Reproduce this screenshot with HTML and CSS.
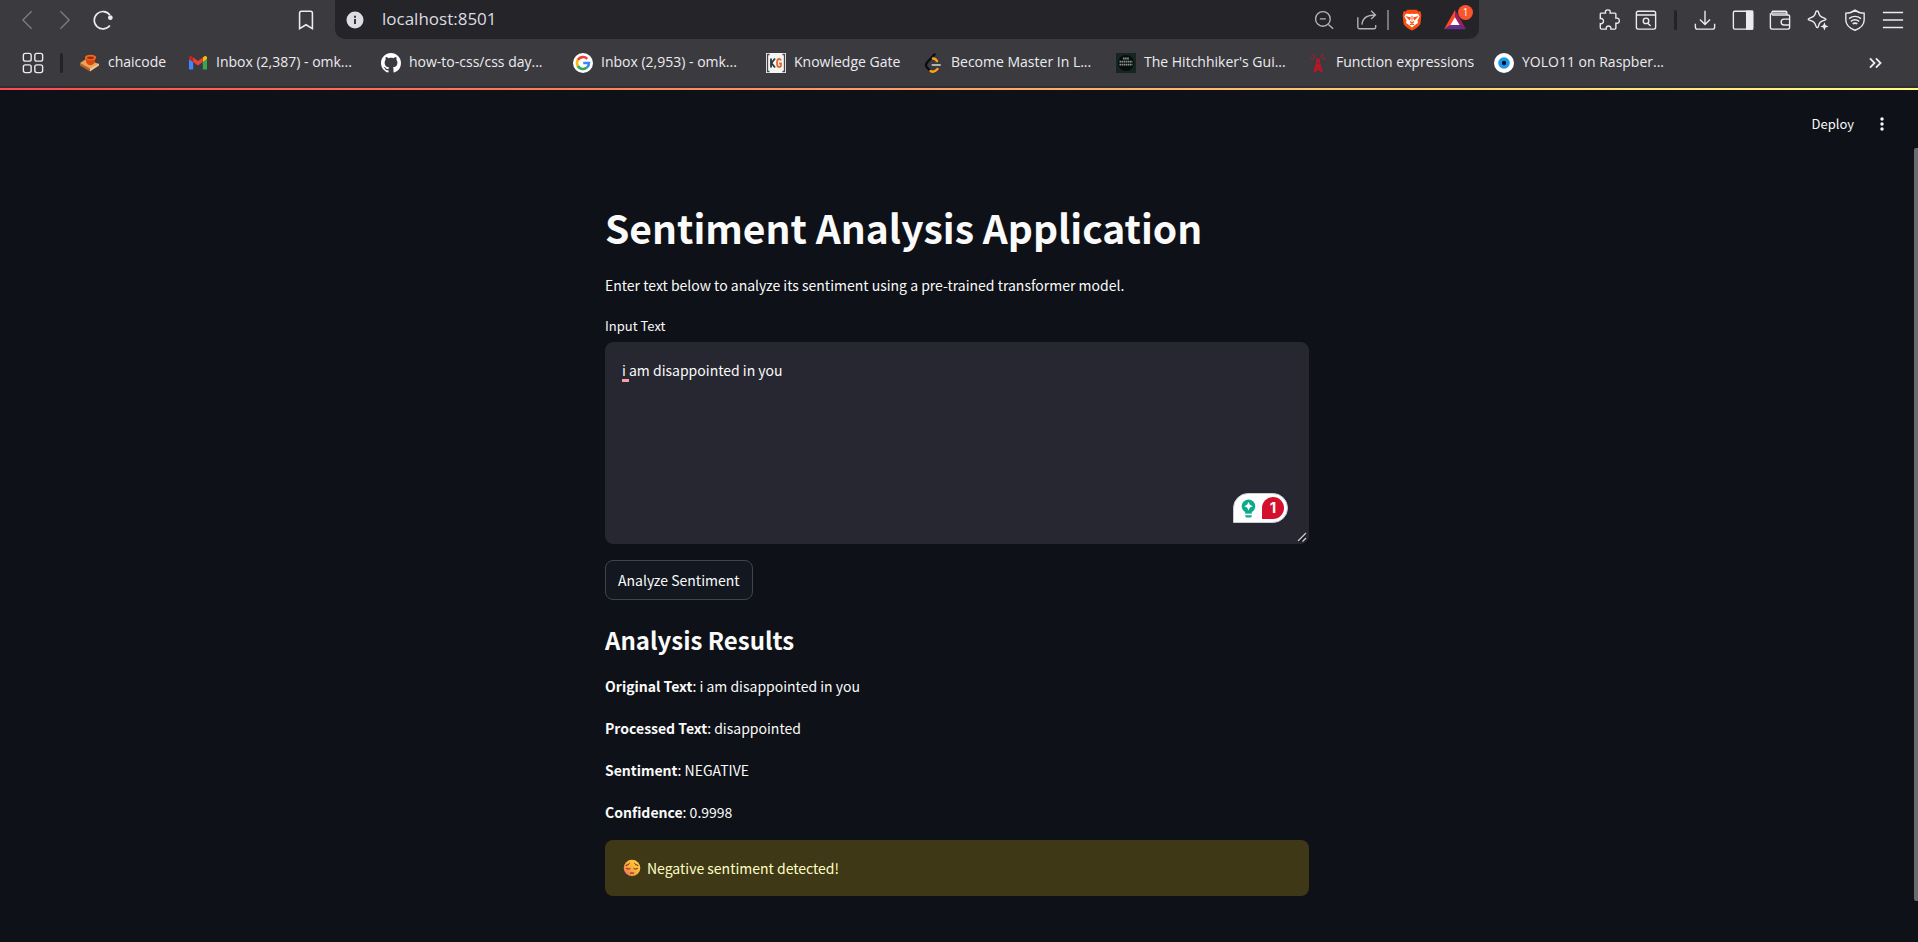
FILE: index.html
```html
<!DOCTYPE html>
<html lang="en">
<head>
<meta charset="utf-8">
<meta name="viewport" content="width=device-width, initial-scale=1">
<title>Sentiment Analysis Application</title>
<link rel="stylesheet" href="styles.css">
</head>
<body>
<div class="window">
  <header class="chrome">
    <div class="toolbar">
      <nav class="history" aria-label="History">
        <button class="tool tool-dim" aria-label="Back"><svg viewBox="0 0 24 24"><path d="M17 2.500 7.500 12l9.500 9.500"/></svg></button>
        <button class="tool tool-dim" aria-label="Forward"><svg viewBox="0 0 24 24"><path d="M7 2.500 16.500 12 7 21.500"/></svg></button>
        <button class="tool" aria-label="Reload"><svg viewBox="0 0 24 24"><path d="M19.500 18A9.500 9.500 0 1 1 19.500 6.500" stroke-width="1.800"/><circle cx="20" cy="9.500" r="2.600" fill="currentColor" stroke="none"/></svg></button>
      </nav>
      <button class="tool" aria-label="Bookmark this page"><svg viewBox="0 0 24 24"><path d="M5 4.500A2 2 0 0 1 7 2.500H17A2 2 0 0 1 19 4.500V21.500L12 17.200 5 21.500Z" stroke-width="1.700"/></svg></button>
      <div class="address">
        <svg class="info" viewBox="0 0 18 18"><circle cx="9" cy="9" r="8.500" fill="#dedde3"/><path d="M9 8v5M9 4.700v2" stroke="#38373c" stroke-width="2"/></svg>
        <input class="url" type="text" aria-label="Address" value="localhost:8501">
        <button class="tool tool-soft" aria-label="Zoom out"><svg viewBox="0 0 24 24"><circle cx="10.800" cy="10.800" r="8"/><path d="M7.500 10.800H14M16.800 16.800 22 21.500"/></svg></button>
        <button class="tool tool-soft tool-share" aria-label="Share"><svg viewBox="0 0 24 24"><path d="M2 9V20A1.500 1.500 0 0 0 3.500 21.500H20A1.500 1.500 0 0 0 21.500 20V17.500M6.500 17C7 10 11 6.500 21 6.500M16.500 2 21.200 6.500 16.500 11"/></svg></button>
        <span class="address-rule"></span>
        <button class="tool" aria-label="Brave Shields"><svg viewBox="0 0 24 26"><path d="M6.500 1H17.500L19.500 3 22 2.800 23 7 22 17C21 20 18 22 12 25.500 6 22 3 20 2 17L1 7 2 2.800 4.500 3Z" fill="#fb4f12" stroke="none"/><path d="M5 5.500 9.500 6 12 5.500 14.500 6 19 5.500 21 9 18.500 13.500 19 16.500 16 18.500 12 22 8 18.500 5 16.500 5.500 13.500 3 9Z" fill="#fff" stroke="none"/><path d="M6 9.500 10 10.500 9 12.500ZM18 9.500 14 10.500 15 12.500ZM12 8V13.500M9.500 15 12 16.500 14.500 15M9.500 18.500 12 17.500 14.500 18.500" fill="#fb4f12" stroke="#fb4f12" stroke-width="1.200"/></svg></button>
        <button class="tool tool-rewards" aria-label="Brave Rewards, 1 new"><svg viewBox="0 0 24 24"><path d="M12 1 0 22 7.500 17.500 12 9.500Z" fill="#ff4724" stroke="none"/><path d="M12 1 24 22 16.500 17.500 12 9.500Z" fill="#9e1f63" stroke="none"/><path d="M0 22H24L16.500 17.500H7.500Z" fill="#662d91" stroke="none"/><path d="M12 9 17 17.500H7Z" fill="#fff" stroke="none"/></svg><span class="count">1</span></button>
      </div>
      <div class="extensions">
        <button class="tool" aria-label="Extensions"><svg viewBox="0 0 24 24"><path d="M3 4.500H8.200C7.500 1.500 9 1 10.700 1S14 1.500 13.200 4.500H18.500Q19.500 4.500 19.500 5.500V10C22.500 9.500 23.200 11 23.200 12.800S22.500 16 19.500 15.500V20.500Q19.500 22 18.500 22H14C14.500 19.500 13 18.500 11.500 18.500S8.500 19.500 9 22H4Q2.500 22 2.500 20.500V16C5 16.500 6 14.800 6 13.200S5 10 2.500 10.500V5.500Q2.500 4.500 3 4.500Z"/></svg></button>
        <button class="tool" aria-label="Search page"><svg viewBox="0 0 24 24"><rect x="1.500" y="2.500" width="21" height="19.500" rx="2"/><path d="M1.500 6.500H22.500M14 15.500 17 18.500"/><circle cx="12" cy="13" r="3"/></svg></button>
      </div>
      <span class="rule"></span>
      <div class="actions">
        <button class="tool" aria-label="Downloads"><svg viewBox="0 0 24 24"><path d="M12 2V16.500M6.500 11.500 12 17 17.500 11.500M1.500 16V19.500Q1.500 22 4 22H20Q22.500 22 22.500 19.500V16"/></svg></button>
        <button class="tool" aria-label="Sidebar"><svg viewBox="0 0 24 24"><rect x="1.500" y="2.500" width="21" height="19.500" rx="1.500"/><path d="M16 2.500H22.500V22H16Z" fill="currentColor"/></svg></button>
        <button class="tool" aria-label="Wallet"><svg viewBox="0 0 24 24"><path d="M19.500 6V4Q19.500 2.500 18 2.500H4A2.500 2.500 0 0 0 4 6.500H21Q22.500 6.500 22.500 8V20Q22.500 22 20.500 22H3.500Q1.500 22 1.500 20V4.500M22.500 11H16.500A3 3 0 0 0 16.500 17.500H22.500M4 4.500H19"/></svg></button>
        <button class="tool" aria-label="Assistant"><svg viewBox="0 0 24 24"><path d="M11 2Q12 2 12.300 3C13.500 7.500 14.500 8.500 19.500 10.200 21 10.700 21 11.800 19.500 12.200 14.500 13.500 13.500 14.500 12.300 19.200 12 20.700 10.500 20.700 10 19.200 8.500 14.500 7.500 13.500 2.500 12.200 1 11.800 1 10.700 2.500 10.200 7.500 8.500 8.500 7.500 9.700 3Q10 2 11 2Z"/><path d="M19 14.500 20.300 17.700 23.500 19 20.300 20.300 19 23.500 17.700 20.300 14.500 19 17.700 17.700Z" fill="currentColor" stroke="none"/></svg></button>
        <button class="tool" aria-label="VPN"><svg viewBox="0 0 24 24"><path d="M12 1.200C15 3.500 18 4.500 22 4.500V12C22 17.500 18 21 12 23.200 6 21 2 17.500 2 12V4.500C6 4.500 9 3.500 12 1.200ZM5.500 10.500Q12 5.500 18.500 10.500M7.500 13.500Q12 10 16.500 13.500"/><path d="M9.500 16.200Q12 14.500 14.500 16.200" stroke-width="2"/></svg></button>
        <button class="tool" aria-label="Menu"><svg viewBox="0 0 24 24"><path d="M1 3.800H23M1 12H23M1 20.200H23" stroke-width="1.800"/></svg></button>
      </div>
    </div>
    <nav class="bookmarks" aria-label="Bookmarks">
      <button class="tool" aria-label="All bookmarks"><svg viewBox="0 0 24 24"><rect x="1.500" y="1.500" width="8.500" height="8.500" rx="2.200"/><rect x="14" y="1.500" width="8.500" height="8.500" rx="2.200"/><rect x="1.500" y="14" width="8.500" height="8.500" rx="2.200"/><rect x="14" y="14" width="8.500" height="8.500" rx="2.200"/></svg></button>
      <span class="rule"></span>
      <div class="bookmark-list">
        <a class="bookmark" href="#"><svg viewBox="0 0 20 20"><path d="M0 10 6 6 19 11 10 18Z" fill="#e9a35c"/><path d="M0 10 10 15.500V18.500L0 12.500Z" fill="#b8622b"/><path d="M10 15.500 19 10.500V12.500L10 18.500Z" fill="#f2c58c"/><path d="M5 4 16 4 14.500 10Q10 14.500 6.500 10Z" fill="#d9480f"/><ellipse cx="10.500" cy="4.500" rx="5.500" ry="2.700" fill="#f26a21"/><ellipse cx="10.500" cy="4.800" rx="3.500" ry="1.400" fill="#9c2d0a"/></svg><span>chaicode</span></a>
        <a class="bookmark" href="#"><svg viewBox="0 0 20 20"><path d="M1 6V16.500H5.200V9Z" fill="#4285f4"/><path d="M14.800 9V16.500H19V6Z" fill="#34a853"/><path d="M14.800 4.500V9L19 6V5C19 3 17 2.500 15.800 3.700Z" fill="#fbbc04"/><path d="M1 5V6L5.200 9V4.500L4.200 3.700C3 2.500 1 3 1 5Z" fill="#c5221f"/><path d="M5.200 4.500V9L10 12.600 14.800 9V4.500L10 8.100Z" fill="#ea4335"/></svg><span>Inbox (2,387) - omk...</span></a>
        <a class="bookmark" href="#"><svg viewBox="0 0 16 16"><path fill="#fff" d="M8 0C3.580 0 0 3.580 0 8c0 3.540 2.290 6.530 5.470 7.590.4.070.55-.17.55-.38 0-.19-.01-.82-.01-1.490-2.010.37-2.530-.49-2.690-.94-.09-.23-.48-.94-.82-1.130-.28-.15-.68-.52-.01-.53.63-.01 1.080.58 1.230.82.72 1.210 1.870.87 2.330.66.07-.52.28-.87.51-1.070-1.780-.2-3.640-.89-3.640-3.950 0-.87.31-1.590.82-2.150-.08-.2-.36-1.020.08-2.120 0 0 .67-.21 2.200.82.64-.18 1.320-.27 2-.27s1.360.09 2 .27c1.530-1.040 2.200-.82 2.200-.82.44 1.100.16 1.920.08 2.120.51.56.82 1.270.82 2.150 0 3.070-1.870 3.750-3.650 3.950.29.25.54.73.54 1.480 0 1.070-.01 1.930-.01 2.200 0 .21.15.46.55.38A8.010 8.010 0 0 0 16 8c0-4.420-3.580-8-8-8Z"/></svg><span>how-to-css/css day...</span></a>
        <a class="bookmark" href="#"><svg viewBox="0 0 20 20"><circle cx="10" cy="10" r="10" fill="#fff"/><g fill="none" stroke-width="2.600"><path d="M14.200 5.800A6 6 0 0 0 4.800 7" stroke="#ea4335"/><path d="M4.800 7A6 6 0 0 0 4.800 13" stroke="#fbbc05"/><path d="M4.800 13A6 6 0 0 0 13.900 14.600" stroke="#34a853"/><path d="M13.900 14.600A6 6 0 0 0 16 10H10.200" stroke="#4285f4"/></g></svg><span>Inbox (2,953) - omk...</span></a>
        <a class="bookmark" href="#"><svg viewBox="0 0 20 20"><path d="M0 0H20V20H0Z" fill="#f4f4f2"/><path d="M3.500 1.500H1.500V18.500H3.500M16.500 1.500H18.500V18.500H16.500" fill="none" stroke="#44484b" stroke-width="1.300"/><path d="M5 5.500V14.500M9 5.500 5.500 10 9 14.500" fill="none" stroke="#27363f" stroke-width="1.800"/><path d="M15 7.500Q14.500 6 13 6 11 6 11 10T13 14Q15 14 15 12.500V10.500H13" fill="none" stroke="#e8692c" stroke-width="1.800"/></svg><span>Knowledge Gate</span></a>
        <a class="bookmark" href="#"><svg viewBox="0 0 20 20"><g fill="none" stroke-linecap="round" stroke-width="2.400"><path d="M11.500 1.500 4 9.500Q2 12 4 14.500L7 17.500" stroke="#0c0c0d"/><path d="M10 5.500Q12 5 14 8M7.500 18Q11 20 14.500 16" stroke="#ffa116"/><path d="M9.500 12H17" stroke="#b3b3b3" stroke-width="2"/></g></svg><span>Become Master In L...</span></a>
        <a class="bookmark" href="#"><svg viewBox="0 0 20 20"><path d="M0 0H20V20H0Z" fill="#152520"/><circle cx="10" cy="10" r="8" fill="#080d0b"/><path d="M7 5.500H13M3.500 8.700H16.500M3.500 11.700H16.500" stroke="#8b9590" stroke-width="1.800" stroke-dasharray="1.600 .5"/></svg><span>The Hitchhiker's Gui...</span></a>
        <a class="bookmark" href="#"><svg viewBox="0 0 20 20"><g fill="none" stroke="#bd1528" stroke-width="1.300"><path d="M9.500 7 6 19M10.500 7 14 19M8 12H12L7 16M8 12 13 16H7M6 19 10 16 14 19M7 4.500 5 1.500M13 4.500 15 1.500M5.500 6 2.500 5M14.500 6 17.500 5"/><circle cx="10" cy="7.500" r="1.600"/></g></svg><span>Function expressions</span></a>
        <a class="bookmark" href="#"><svg viewBox="0 0 20 20"><circle cx="10" cy="10" r="10" fill="#fff"/><circle cx="10" cy="10" r="5.800" fill="#2196e8"/><circle cx="10" cy="10" r="2.200" fill="#08131c"/></svg><span>YOLO11 on Raspber...</span></a>
      </div>
      <button class="tool" aria-label="More bookmarks"><svg viewBox="0 0 24 24"><path d="M6.500 7 11.500 12 6.500 17M13 7 18 12 13 17" stroke-width="2"/></svg></button>
    </nav>
  </header>
  <div class="app">
    <div class="app-bar">
      <button class="deploy">Deploy</button>
      <button class="dots" aria-label="Main menu"><svg viewBox="0 0 16 16"><circle cx="8" cy="3" r="1.700"/><circle cx="8" cy="8" r="1.700"/><circle cx="8" cy="13" r="1.700"/></svg></button>
    </div>
    <main class="content">
      <h1>Sentiment Analysis Application</h1>
      <p class="intro">Enter text below to analyze its sentiment using a pre-trained transformer model.</p>
      <label class="field-label" for="input-text">Input Text</label>
      <div class="field">
        <textarea id="input-text" class="field-input" spellcheck="false">i am disappointed in you</textarea>
        <span class="spelling-mark"></span>
        <div class="checker">
          <svg class="bulb" viewBox="0 0 16 20"><circle cx="8" cy="7.500" r="7.200" fill="#0daa8d"/><path d="M4.500 12H11.500V15.500H4.500Z" fill="#0daa8d"/><path d="M4.500 17.200H11.500V18Q11.500 19.500 10 19.500H6Q4.500 19.500 4.500 18Z" fill="#0daa8d"/><path d="M8 3 9.500 6 12.500 7.500 9.500 9 8 12 6.500 9 3.500 7.500 6.500 6Z" fill="#fff"/></svg>
          <span class="checker-count">1</span>
        </div>
        <svg class="grip" viewBox="0 0 10 10"><path d="M1 9.500 9 1.500M5.500 9.500 9 6" stroke="#111" stroke-width="3"/><path d="M1 9 9 1M5.500 9.500 9 6" stroke="#c9c9cc" stroke-width="1.500"/></svg>
      </div>
      <button class="analyze">Analyze Sentiment</button>
      <h2>Analysis Results</h2>
      <div class="results">
        <p><strong>Original Text</strong>: i am disappointed in you</p>
        <p><strong>Processed Text</strong>: disappointed</p>
        <p><strong>Sentiment</strong>: NEGATIVE</p>
        <p><strong>Confidence</strong>: 0.9998</p>
      </div>
      <div class="alert" role="alert">
        <svg class="face" viewBox="0 0 18 18"><defs><linearGradient id="skin" x1="1" y1="0" x2="0" y2="1"><stop offset="0" stop-color="#ffd84c"/><stop offset=".55" stop-color="#fba936"/><stop offset="1" stop-color="#ee5f7a"/></linearGradient></defs><circle cx="9" cy="9" r="8.300" fill="url(#skin)"/><path d="M3 6.500Q5.500 6 6.500 4.500M15 6.500Q12.500 6 11.500 4.500M3.500 9.500Q5 10.800 7 9.800M11 9.800Q13 10.800 14.500 9.500M7.500 14H10.500" fill="none" stroke="#5b2a2b" stroke-linecap="round"/></svg>
        <span>Negative sentiment detected!</span>
      </div>
    </main>
    <div class="scroll-thumb"></div>
  </div>
</div>
</body>
</html>
```
FILE: styles.css
```css
* {
  box-sizing: border-box;
}

body {
  margin: 0;
  background: #0e1117;
  color: #fafafa;
  font: 14px/24px "Noto Sans CJK SC", "Noto Sans", sans-serif;
}

button {
  border: 0;
  padding: 0;
  background: none;
  color: inherit;
  font: inherit;
}

.window {
  display: flex;
  flex-direction: column;
  min-height: 100vh;
}

/* Browser chrome */
.chrome {
  background: #3b3a3f;
  color: #ececf0;
  font: 14px/20px "Open Sans", "Noto Sans", sans-serif;
  border-bottom: 2px solid #302f35;
}

.toolbar {
  display: flex;
  align-items: center;
  height: 39px;
  padding: 0 13px 0 15px;
}

.tool {
  position: relative;
  flex: none;
  display: grid;
  place-items: center;
  width: 24px;
  height: 24px;
}

.tool svg {
  width: 22px;
  height: 22px;
  fill: none;
  stroke: currentColor;
  stroke-width: 1.5;
}

.tool-dim {
  color: #7d7c82;
}

.tool-soft {
  color: #b4b3b9;
}

.history {
  display: flex;
  gap: 14px;
  margin-right: 179px;
}

.address {
  display: flex;
  align-items: center;
  flex: 1;
  height: 39px;
  margin: 0 118px 0 17px;
  padding: 0 12px 0 11px;
  border-radius: 0 0 10px 10px;
  background: #242429;
}

.info {
  width: 18px;
  height: 18px;
}

.url {
  flex: 1;
  min-width: 0;
  height: 30px;
  margin: 0 12px 0 18px;
  padding: 0 0 2px;
  border: 0;
  outline: 0;
  background: none;
  color: #dcdce2;
  font: 17px/24px "Open Sans", "Noto Sans", sans-serif;
}

.tool-share {
  margin: 0 8px 0 19px;
}

.address-rule {
  width: 2px;
  height: 20px;
  margin-right: 11px;
  background: #77767c;
}

.tool-rewards {
  margin-left: 19px;
}

.count {
  position: absolute;
  top: -3px;
  right: -6px;
  width: 15px;
  height: 15px;
  border-radius: 50%;
  background: #fb542b;
  color: #fff;
  font-size: 10px;
  line-height: 15px;
  text-align: center;
}

.extensions {
  display: flex;
  gap: 13px;
}

.rule {
  flex: none;
  width: 3px;
  height: 20px;
  border-radius: 2px;
  background: #232228;
}

.toolbar .rule {
  margin: 0 16px;
}

.actions {
  display: flex;
  justify-content: space-between;
  width: 212px;
}

.bookmarks {
  display: flex;
  align-items: center;
  height: 47px;
  padding: 0 31px 0 21px;
}

.bookmarks .rule {
  margin: 0 17px 0 15px;
}

.bookmark-list {
  display: grid;
  grid-template-columns: 108px 193px 192px 193px 157px 193px 192px 186px auto;
  flex: 1;
}

.bookmark {
  display: flex;
  align-items: center;
  gap: 8px;
  color: inherit;
  text-decoration: none;
  white-space: nowrap;
}

.bookmark span {
  padding-bottom: 1px;
}

.bookmark svg {
  flex: none;
  width: 20px;
  height: 20px;
}

/* Application */
.app {
  position: relative;
  flex: 1;
  padding-right: 4px;
  border-top: 2px solid;
  border-image: linear-gradient(90deg, #ff4b4b, #fffd80) 1;
}

.app-bar {
  display: flex;
  justify-content: flex-end;
  align-items: center;
  gap: 20px;
  height: 68px;
  padding-right: 24px;
  font-size: 13px;
}

.dots {
  display: grid;
}

.dots svg {
  width: 16px;
  height: 16px;
  fill: currentColor;
}

.content {
  max-width: 704px;
  margin: 0 auto;
  padding: 41px 0 40px;
}

h1 {
  margin: 0 0 18px;
  font-size: 39px;
  font-weight: 700;
  line-height: 56px;
}

.intro {
  margin: 0 0 17px;
}

.field-label {
  display: block;
  margin-bottom: 4px;
  font-size: 13px;
}

.field {
  position: relative;
  height: 202px;
  margin-bottom: 16px;
}

.field-input {
  display: block;
  width: 100%;
  height: 100%;
  padding: 15px 16px;
  border: 1px solid #262730;
  border-radius: 8px;
  outline: 0;
  resize: none;
  background: #262730;
  color: inherit;
  font: inherit;
}

.spelling-mark {
  position: absolute;
  top: 37px;
  left: 17px;
  width: 7px;
  height: 3px;
  background: #ff9ca9;
}

.checker {
  position: absolute;
  right: 21px;
  bottom: 21px;
  display: flex;
  align-items: center;
  gap: 6px;
  height: 30px;
  padding: 0 3px 0 7px;
  border: 1px solid #c9ccd8;
  border-radius: 15px 15px 15px 0;
  background: #fff;
}

.bulb {
  width: 15px;
  height: 19px;
}

.checker-count {
  width: 22px;
  height: 22px;
  border-radius: 11px 11px 11px 0;
  background: #d5102f;
  font: 700 15px/22px Inter, sans-serif;
  text-align: center;
}

.grip {
  position: absolute;
  right: 2px;
  bottom: 2px;
  width: 10px;
  height: 10px;
}

.analyze {
  height: 40px;
  padding: 0 12px;
  border: 1px solid #41444c;
  border-radius: 8px;
  background: #131720;
}

h2 {
  margin: 23px 0 17px;
  font-size: 24px;
  font-weight: 600;
  line-height: 34px;
}

.results {
  display: grid;
  gap: 18px;
}

.results p {
  margin: 0;
}

.alert {
  display: flex;
  align-items: center;
  gap: 6px;
  min-height: 56px;
  margin-top: 16px;
  padding: 16px 18px;
  border-radius: 8px;
  background: #3e3816;
  color: #ffffc2;
}

.face {
  width: 18px;
  height: 18px;
}

.scroll-thumb {
  position: absolute;
  top: 58px;
  right: 0;
  bottom: 41px;
  width: 4px;
  border-radius: 2px 0 0 2px;
  background: #6b6b6d;
}
```
